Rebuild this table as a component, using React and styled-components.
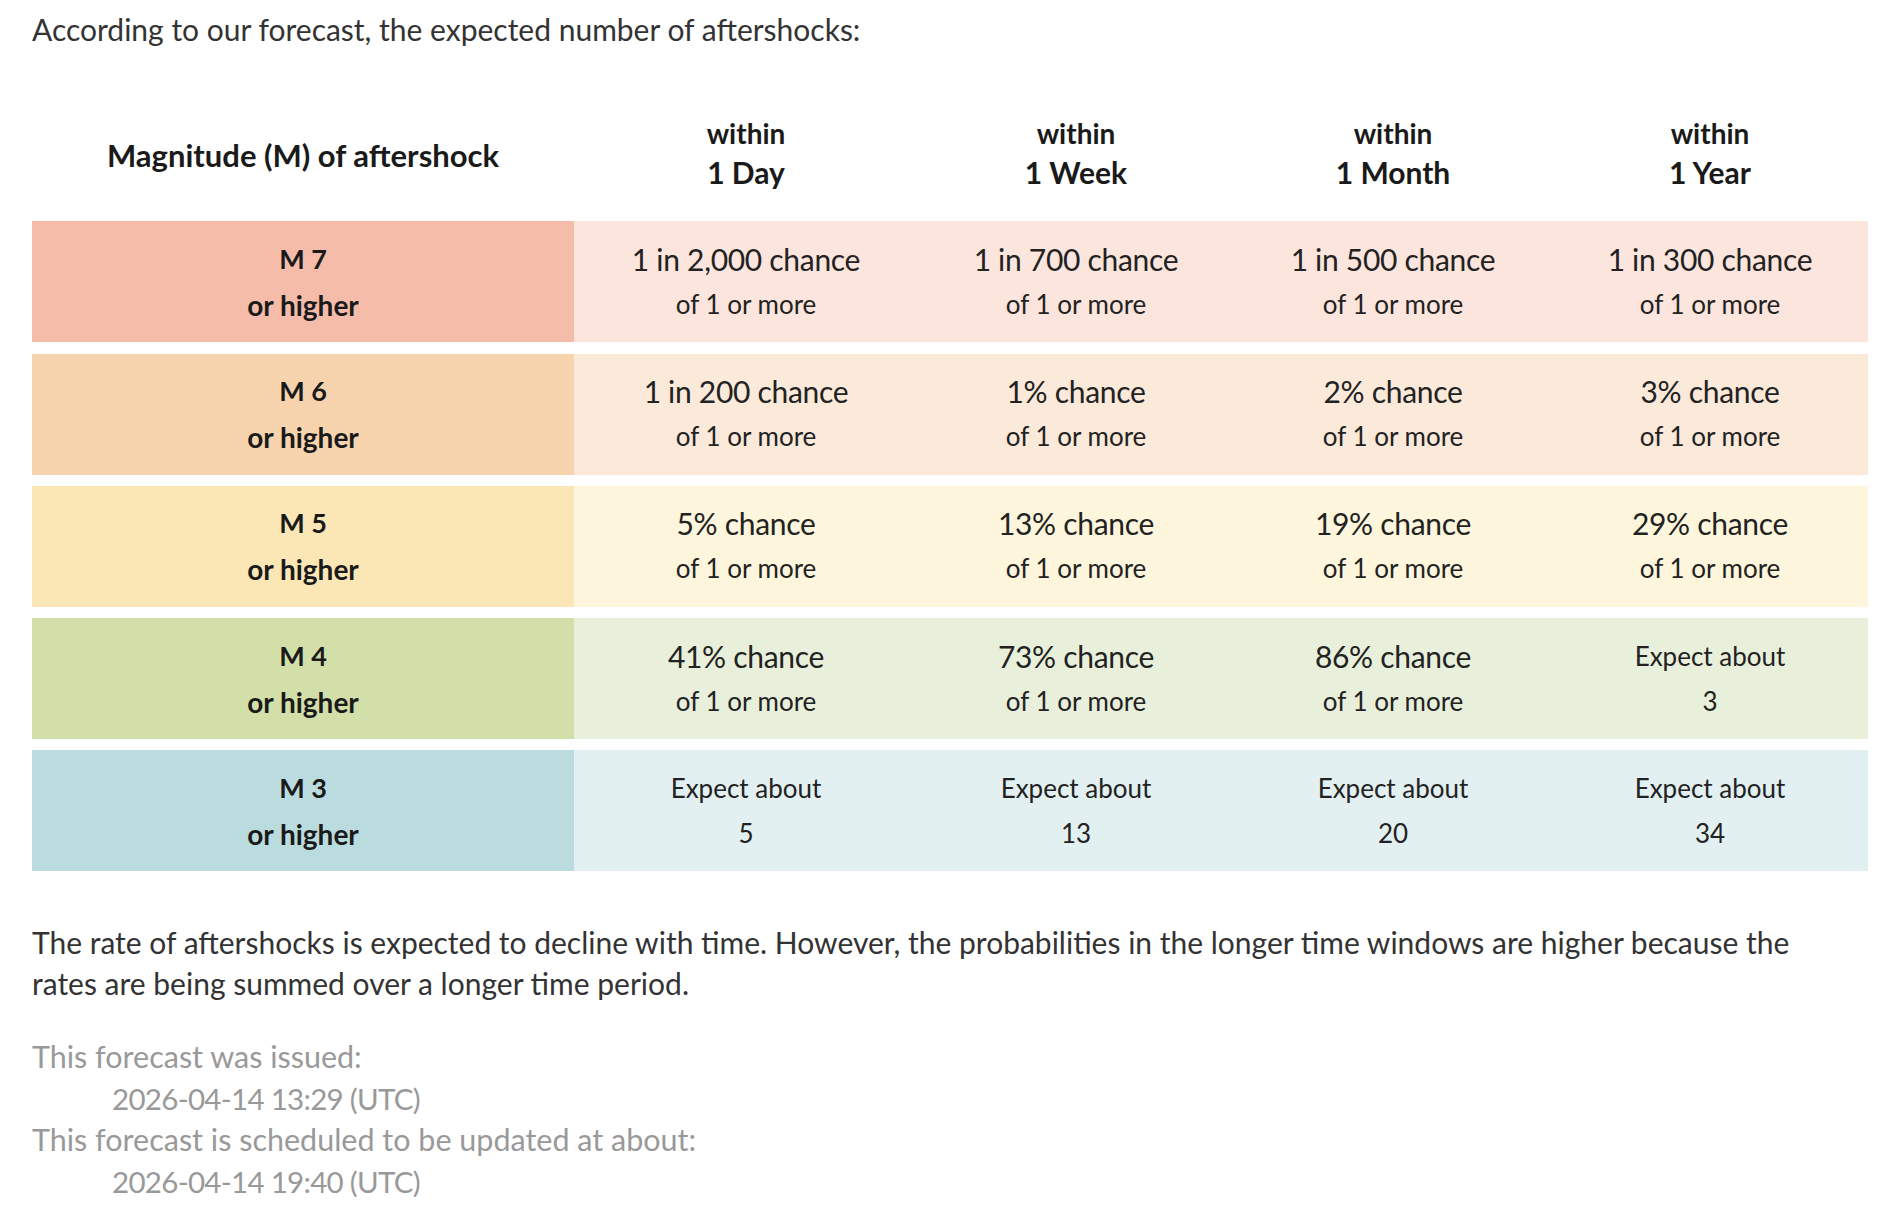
import React from "react";
import styled, { createGlobalStyle } from "styled-components";

const GlobalStyle = createGlobalStyle`
  html, body {
    margin: 0;
    padding: 0;
    background: #ffffff;
  }
  body {
    font-family: Lato, "Noto Sans", "Liberation Sans", sans-serif;
    color: #333333;
  }
`;

const Page = styled.div`
  width: 1836px;
  padding: 8px 20px 0 32px;
`;

const Intro = styled.p`
  margin: 0;
  font-size: 30px;
  line-height: 42px;
  color: #333333;
`;

// forecast table
const Table = styled.div`
  margin-top: 47px;
  display: flex;
  flex-direction: column;
  gap: 11.25px;
`;

const Row = styled.div`
  display: grid;
  grid-template-columns: 542px 344px 316px 318px 316px;
  height: ${(p) => (p.$head ? "116px" : "121px")};
  margin-bottom: ${(p) => (p.$head ? "-3px" : "0")};
`;

const Cell = styled.div`
  display: flex;
  flex-direction: column;
  align-items: center;
  justify-content: center;
  text-align: center;
  background: ${(p) => p.$bg || "transparent"};
  color: #1f1f1f;
`;

const HeadMain = styled.div`
  font-weight: 700;
  font-size: ${(p) => (p.$wide ? "31px" : "30px")};
  line-height: 39px;
  color: #1a1a1a;
`;

const HeadSmall = styled.div`
  font-weight: 700;
  font-size: 28px;
  line-height: 39px;
  margin-top: -5px;
  color: #1a1a1a;
`;

const Label = styled.div`
  font-weight: 700;
  font-size: ${(p) => (p.$sub ? "28px" : "27px")};
  line-height: 46px;
  color: #1a1a1a;
`;

const Value = styled.div`
  font-size: ${(p) => (p.$small ? "26px" : "30px")};
  line-height: 45px;
  letter-spacing: ${(p) => (p.$small ? "0" : "-0.3px")};
  color: #222222;
`;

const Note = styled.p`
  margin: 51px 0 0;
  max-width: 1790px;
  font-size: 30px;
  line-height: 41px;
  color: #333333;
`;

const Meta = styled.div`
  margin-top: 32px;
  font-size: 30.5px;
  line-height: 41.5px;
  color: #999999;
`;

const MetaDate = styled.div`
  padding-left: 80px;
  font-size: 29.5px;
  letter-spacing: -0.7px;
`;

const periods = ["1 Day", "1 Week", "1 Month", "1 Year"];

const rows = [
  {
    mag: "M 7",
    label: "#f5bcaa",
    fill: "#fce5dd",
    cells: [
      ["1 in 2,000 chance"],
      ["1 in 700 chance"],
      ["1 in 500 chance"],
      ["1 in 300 chance"],
    ],
  },
  {
    mag: "M 6",
    label: "#f7d4ae",
    fill: "#fbe9da",
    cells: [["1 in 200 chance"], ["1% chance"], ["2% chance"], ["3% chance"]],
  },
  {
    mag: "M 5",
    label: "#fbe7b6",
    fill: "#fdf6dc",
    cells: [["5% chance"], ["13% chance"], ["19% chance"], ["29% chance"]],
  },
  {
    mag: "M 4",
    label: "#d2dfa8",
    fill: "#e8efda",
    cells: [["41% chance"], ["73% chance"], ["86% chance"], ["Expect", "3"]],
  },
  {
    mag: "M 3",
    label: "#badcdf",
    fill: "#e2f0f1",
    cells: [
      ["Expect", "5"],
      ["Expect", "13"],
      ["Expect", "20"],
      ["Expect", "34"],
    ],
  },
];

const renderValue = (c) => {
  if (c[0] === "Expect") {
    return (
      <>
        <Value $small>Expect about</Value>
        <Value $small>{c[1]}</Value>
      </>
    );
  }
  return (
    <>
      <Value>{c[0]}</Value>
      <Value $small>of 1 or more</Value>
    </>
  );
};

export default function App() {
  return (
    <>
      <GlobalStyle />
      <Page>
        <Intro>According to our forecast, the expected number of aftershocks:</Intro>
        <Table>
          <Row $head>
            <Cell>
              <HeadMain $wide>Magnitude (M) of aftershock</HeadMain>
            </Cell>
            {periods.map((p) => (
              <Cell key={p}>
                <HeadSmall>within</HeadSmall>
                <HeadMain>{p}</HeadMain>
              </Cell>
            ))}
          </Row>
          {rows.map((r) => (
            <Row key={r.mag}>
              <Cell $bg={r.label}>
                <Label>{r.mag}</Label>
                <Label $sub>or higher</Label>
              </Cell>
              {r.cells.map((c, i) => (
                <Cell key={i} $bg={r.fill}>
                  {renderValue(c)}
                </Cell>
              ))}
            </Row>
          ))}
        </Table>
        <Note>
          The rate of aftershocks is expected to decline with time. However, the
          probabilities in the longer time windows are higher because the rates
          are being summed over a longer time period.
        </Note>
        <Meta>
          <div>This forecast was issued:</div>
          <MetaDate>2026-04-14 13:29 (UTC)</MetaDate>
          <div>This forecast is scheduled to be updated at about:</div>
          <MetaDate>2026-04-14 19:40 (UTC)</MetaDate>
        </Meta>
      </Page>
    </>
  );
}
